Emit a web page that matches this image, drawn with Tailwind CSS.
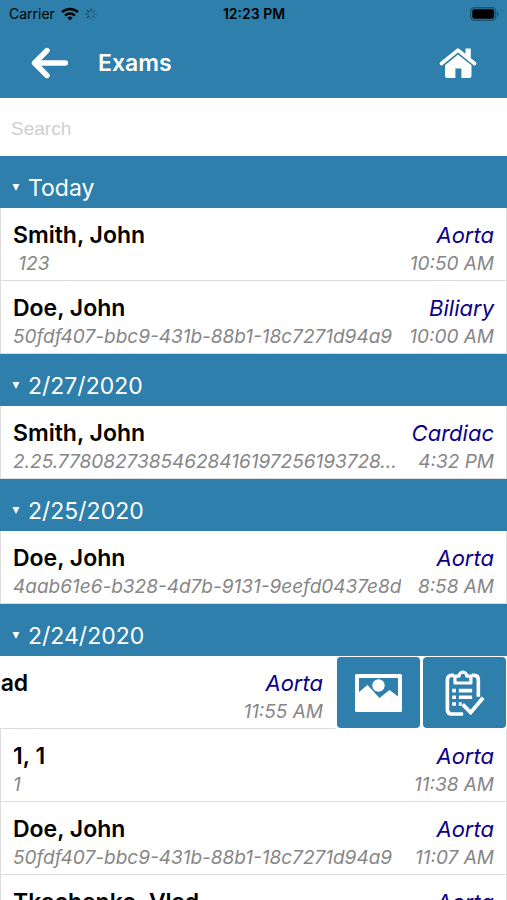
<!DOCTYPE html>
<html lang="en">
<head>
<meta charset="utf-8">
<meta name="viewport" content="width=device-width, initial-scale=1">
<title>Exams</title>
<script src="https://cdn.jsdelivr.net/npm/@tailwindcss/browser@4"></script>
</head>
<body class="h-screen overflow-hidden bg-white font-['Inter','Liberation_Sans',sans-serif] text-black">
<header class="bg-[#2e7fab]">
  <div class="grid h-7 grid-cols-3 items-center pr-2 pl-[9px] text-[14px] leading-4">
    <div class="flex items-center gap-[6px]">
      <span>Carrier</span>
      <svg class="h-[14px] w-[18px]" viewBox="0 0 18 14" fill="none" stroke="#000" stroke-width="2.4" aria-hidden="true"><path d="M1 5.2a11.6 11.6 0 0 1 16 0M4 8.5a7.2 7.2 0 0 1 10 0"/><path d="M9 13.4 6.4 10.8a3.8 3.8 0 0 1 5.2 0z" fill="#000" stroke="none"/></svg>
      <svg class="h-3 w-3" viewBox="0 0 12 12" stroke="#173f55" stroke-width="1.1" stroke-linecap="round" aria-hidden="true"><path d="M6 .8v2.4M2.3 2.3 4 4M.8 6h2.4M2.3 9.7 4 8"/><path d="M6 11.2V8.8M9.7 9.7 8 8M11.2 6H8.8M9.7 2.3 8 4" opacity=".55"/></svg>
    </div>
    <span class="text-center font-semibold">12:23 PM</span>
    <svg class="h-[14px] w-[29px] justify-self-end" viewBox="0 0 29 14" aria-hidden="true"><rect x=".7" y=".7" width="25" height="12.6" rx="3.6" fill="none" stroke="#1d5470" stroke-width="1.4"/><rect x="2.3" y="2.3" width="21.8" height="9.4" rx="2" fill="#000"/><path d="M27.2 5v4c1.8-.5 1.8-3.500 0-4z" fill="#1d5470"/></svg>
  </div>
  <div class="flex h-[70px] items-center pr-[30px] pl-[31px]">
    <button type="button" aria-label="Back" class="mr-[30px]"><svg class="h-8 w-[37px]" viewBox="0 0 37 32" fill="none" stroke="#fff" stroke-width="5.4" stroke-linecap="round" stroke-linejoin="round"><path d="M34.500 16H4M16 3.500 3.500 16 16 28.500"/></svg></button>
    <h1 class="flex-1 text-[23px] leading-7 font-semibold text-white">Exams</h1>
    <button type="button" aria-label="Home"><svg class="h-8 w-[38px]" viewBox="0 0 38 32" fill="#fff"><path d="M2.500 16.500 19 3.200l16.500 13.300" fill="none" stroke="#fff" stroke-width="3.600" stroke-linecap="round" stroke-linejoin="round"/><path d="M26.500 1.500h5.300v10.200l-5.300-4.300zM19 7.500 32.500 18.300V29q0 2-2 2H22.400V21.500h-6V31H8q-2 0-2-2V18.300z"/></svg></button>
  </div>
</header>
<main>
  <input type="search" aria-label="Search" placeholder="Search" class="block h-[58px] w-full bg-white px-[11px] pt-[3px] font-['Liberation_Sans',sans-serif] text-[19px] outline-none placeholder:text-[#cfcfcf]">
  <div id="list"></div>
</main>
<script>
const groups = [
  ['Today', [['Smith, John', '\u00a0123', 'Aorta', '10:50 AM'], ['Doe, John', '50fdf407-bbc9-431b-88b1-18c7271d94a9', 'Biliary', '10:00 AM']]],
  ['2/27/2020', [['Smith, John', '2.25.77808273854628416197256193728...', 'Cardiac', '4:32 PM']]],
  ['2/25/2020', [['Doe, John', '4aab61e6-b328-4d7b-9131-9eefd0437e8d', 'Aorta', '8:58 AM']]],
  ['2/24/2020', [['Tkachenko, Vlad', '', 'Aorta', '11:55 AM', true], ['1, 1', '1', 'Aorta', '11:38 AM'], ['Doe, John', '50fdf407-bbc9-431b-88b1-18c7271d94a9', 'Aorta', '11:07 AM'], ['Tkachenko, Vlad', '', 'Aorta', '']]],
];
const actions = `<div class="flex w-[171px] shrink-0 gap-[3px] p-px">
  <button type="button" aria-label="Images" class="flex flex-1 items-center justify-center rounded-[4px] bg-[#2e7fab]"><svg class="h-[38px] w-[47px]" viewBox="0 0 47 38"><rect width="47" height="38" rx="1.500" fill="#fff"/><path d="M4 4h39v18.500l-8.500-6.500-10 8-12-13L4 18z" fill="#2e7fab"/><circle cx="23.500" cy="11.500" r="6.700" fill="#fff" stroke="#2e7fab" stroke-width="1"/></svg></button>
  <button type="button" aria-label="Report" class="flex flex-1 items-center justify-center rounded-[4px] bg-[#2e7fab]"><svg class="h-[46px] w-10" viewBox="0 0 42 48" fill="none" stroke="#fff" stroke-width="3.800"><path d="M9.500 5.500H7Q2.500 5.500 2.500 10v31.500Q2.500 46 7 46h12M28 5.500h2.500Q35 5.500 35 10v18"/><path d="M10.500 13.500V6.200h4.300a4 4 0 0 1 8 0h4.400v7.300z" stroke-width="3.400" stroke-linejoin="round"/><path d="M14.500 21.500h14M14.500 28.500h14M14.500 35.500h3M7.500 21.500h4M7.500 28.500h4M7.500 35.500h4"/><path d="m18.500 36 8.500 8.500L40 29" stroke-width="4"/></svg></button>
</div>`;
const row = ([name, id, type, time, open]) => `<li class="flex h-[73px] overflow-hidden">
  <a href="#" class="${open ? '-ml-[171px] border-r-transparent ' : ''}block w-full shrink-0 border-x border-b border-[#dcdcdc] px-3 pt-3">
    <span class="flex h-8 items-start justify-between text-[23px] leading-[30px]"><span class="font-semibold">${name}</span><span class="text-[22px] text-[#0b0089] italic">${type}</span></span>
    <span class="flex items-center justify-between gap-3 text-[19px] leading-6 text-[#868686] italic"><span class="min-w-0 truncate">${id}</span><span class="shrink-0">${time}</span></span>
  </a>${open ? actions : ''}</li>`;
document.getElementById('list').innerHTML = groups.map(([title, rows]) => `<section>
  <h2><button type="button" aria-expanded="true" class="flex h-[52px] w-full items-center gap-2 bg-[#2e7fab] pt-[11px] pl-3 text-[23px] leading-7 text-white"><svg class="h-[7px] w-2" viewBox="0 0 8 7" fill="#fff"><path d="M.5 0h7L4 7z"/></svg>${title}</button></h2>
  <ul>${rows.map(row).join('')}</ul></section>`).join('');
</script>
</body>
</html>
